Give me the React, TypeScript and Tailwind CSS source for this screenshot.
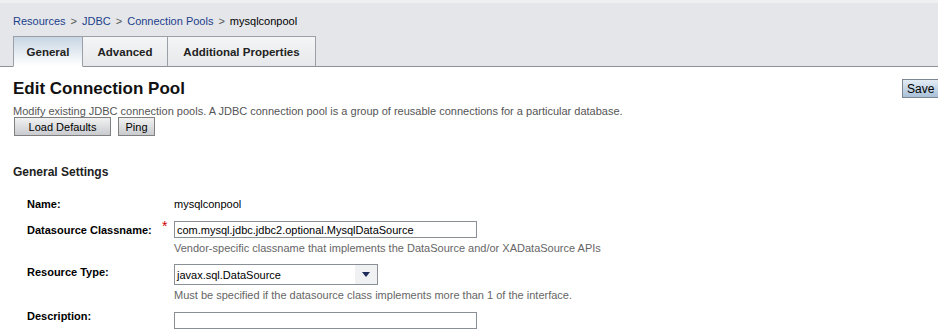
import { useState } from "react";

const tabs = ["General", "Advanced", "Additional Properties"];

function Field({
  label,
  required,
  labelPt = "pt-[2px]",
  className = "",
  children,
}: {
  label: string;
  required?: boolean;
  labelPt?: string;
  className?: string;
  children: React.ReactNode;
}) {
  return (
    <div className={"flex " + className}>
      <div className={"relative w-[147px] shrink-0 text-[11px] leading-[14px] font-bold text-[#000] " + labelPt}>
        {label}
        {required && <span className="absolute left-[135px] top-[-2px] text-[14px] font-normal text-[#c00]">*</span>}
      </div>
      <div className="flex flex-col">{children}</div>
    </div>
  );
}

export default function App() {
  const [active, setActive] = useState(0);
  const [classname, setClassname] = useState("com.mysql.jdbc.jdbc2.optional.MysqlDataSource");
  const [desc, setDesc] = useState("");

  return (
    <div className="h-[334px] w-[938px] overflow-hidden bg-white font-['Liberation_Sans',Arial,sans-serif] text-[11px] leading-[14px] text-[#000]">
      {/* header band */}
      <div className="border-t-[3px] border-[#eef0f2] bg-[#e4e6ea]">
        <div className="flex h-[33px] items-center gap-[5px] px-[13px] pt-[3px] text-[11px]">
          <a className="text-[#1d3f8a]">Resources</a>
          <span className="text-[#555]">&gt;</span>
          <a className="text-[#1d3f8a]">JDBC</a>
          <span className="text-[#555]">&gt;</span>
          <a className="text-[#1d3f8a]">Connection Pools</a>
          <span className="text-[#555]">&gt;</span>
          <span>mysqlconpool</span>
        </div>
        <div className="flex border-b border-[#8c9298] pl-[13px]">
          {tabs.map((t, i) => (
            <button
              key={t}
              onClick={() => setActive(i)}
              className={
                "mb-[-1px] h-[31px] border border-[#9aa0a6] text-[11.5px] font-bold text-[#222] " +
                (i > 0 ? "border-l-0 " : "") +
                (i === active
                  ? "border-b-white bg-gradient-to-b from-[#c8d6e4] to-white"
                  : "border-b-[#8c9298] bg-gradient-to-b from-[#f4f5f6] to-[#e6e8eb]")
              }
              style={{ width: [70, 85, 148][i] }}
            >
              {t}
            </button>
          ))}
        </div>
      </div>

      {/* title row */}
      <div className="flex items-start justify-between pl-[13px] pt-[12px]">
        <h1 className="text-[17px] font-bold leading-[20px] text-[#111]">Edit Connection Pool</h1>
        <button className="mr-[-10px] h-[19px] w-[46px] border border-[#7d8793] bg-gradient-to-b from-[#e3ecf5] to-[#a9c0d8] pl-[4px] text-left text-[12px]">
          Save
        </button>
      </div>
      <p className="pl-[13px] pt-[5px] text-[11px] leading-[14px] text-[#555]">
        Modify existing JDBC connection pools. A JDBC connection pool is a group of reusable connections for a particular database.
      </p>
      <div className="mt-[-1px] flex gap-[7px] pl-[14px]">
        <button className="h-[19px] w-[97px] border border-[#808080] bg-gradient-to-b from-[#f2f2f2] to-[#c9cbcf] text-[11px]">
          Load Defaults
        </button>
        <button className="h-[19px] w-[37px] border border-[#808080] bg-gradient-to-b from-[#f2f2f2] to-[#c9cbcf] text-[11px]">
          Ping
        </button>
      </div>

      <h2 className="pl-[13px] pt-[28px] text-[12px] leading-[16px] font-bold text-[#222]">General Settings</h2>

      <div className="flex flex-col pl-[27px] pt-[15px]">
        <Field label="Name:" className="h-[18px]">
          <span className="pt-[2px]">mysqlconpool</span>
        </Field>
        <Field label="Datasource Classname:" required className="mt-[8px]">
          <input
            value={classname}
            onChange={(e) => setClassname(e.target.value)}
            className="h-[17px] w-[303px] border border-[#8a8f96] px-[2px] text-[11px] outline-none"
          />
          <span className="pt-[3px] text-[#666]">Vendor-specific classname that implements the DataSource and/or XADataSource APIs</span>
        </Field>
        <Field label="Resource Type:" labelPt="pt-[1px]" className="mt-[9px]">
          <div className="flex h-[21px] w-[204px] items-center justify-between border border-[#8a8f96] pl-[2px]">
            <span>javax.sql.DataSource</span>
            <span className="flex h-full w-[22px] items-center justify-center bg-[#f0f1f3]">
              <svg width="8" height="5" viewBox="0 0 8 5">
                <path d="M0 0 H8 L4 5 Z" fill="#1e2a5a" />
              </svg>
            </span>
          </div>
          <span className="pt-[3px] text-[#666]">Must be specified if the datasource class implements more than 1 of the interface.</span>
        </Field>
        <Field label="Description:" labelPt="mt-[-3px]" className="mt-[10px]">
          <input
            value={desc}
            onChange={(e) => setDesc(e.target.value)}
            className="h-[17px] w-[303px] border border-[#8a8f96] px-[2px] text-[11px] outline-none"
          />
        </Field>
      </div>
    </div>
  );
}
